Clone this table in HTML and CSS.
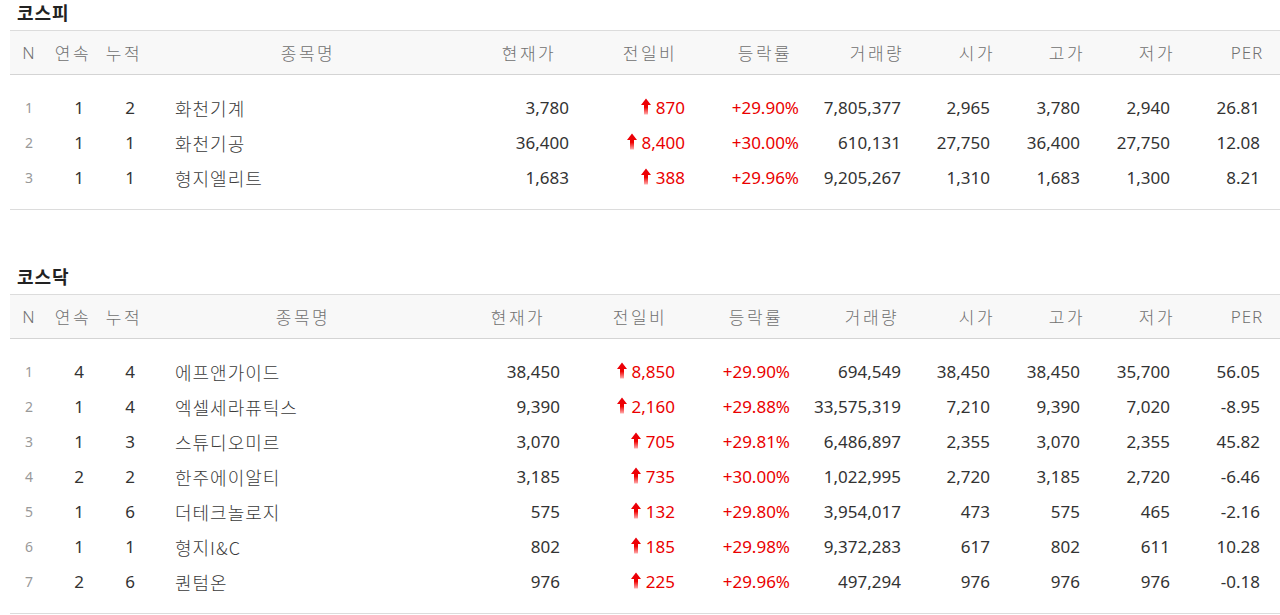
FILE: index.html
```html
<!DOCTYPE html>
<html lang="ko">
<head>
<meta charset="utf-8">
<title>상한가</title>
<link rel="stylesheet" href="styles.css">
</head>
<body>
<svg class="defs" width="0" height="0" aria-hidden="true">
  <defs>
    <linearGradient id="upg" x1="0" y1="0" x2="0" y2="1">
      <stop offset="0" stop-color="#e8000b"/>
      <stop offset="0.55" stop-color="#f00000"/>
      <stop offset="1" stop-color="#ffb0b0"/>
    </linearGradient>
    <symbol id="up" viewBox="0 0 10 16">
      <polygon points="5,0 10,6.5 7,6.5 7,16 3,16 3,6.5 0,6.5" fill="url(#upg)"/>
    </symbol>
  </defs>
</svg>

<section class="market">
  <h2 class="market-title">코스피</h2>
  <table class="stock t-kospi">
    <colgroup>
      <col class="c-n"><col class="c-run"><col class="c-acc"><col class="c-name"><col class="c-cur"><col class="c-diff"><col class="c-rate"><col class="c-vol"><col class="c-open"><col class="c-high"><col class="c-low"><col class="c-per">
    </colgroup>
    <thead>
      <tr><th>N</th><th>연속</th><th>누적</th><th>종목명</th><th>현재가</th><th>전일비</th><th>등락률</th><th>거래량</th><th>시가</th><th>고가</th><th>저가</th><th>PER</th></tr>
    </thead>
    <tbody>
      <tr class="gap-top"><td colspan="12"></td></tr>
      <tr><td class="n">1</td><td class="cnt">1</td><td class="cnt">2</td><td class="name">화천기계</td><td class="num cur">3,780</td><td class="num diff up"><svg class="arrow"><use href="#up"/></svg>870</td><td class="num rate up">+29.90%</td><td class="num vol">7,805,377</td><td class="num">2,965</td><td class="num">3,780</td><td class="num">2,940</td><td class="num">26.81</td></tr>
      <tr><td class="n">2</td><td class="cnt">1</td><td class="cnt">1</td><td class="name">화천기공</td><td class="num cur">36,400</td><td class="num diff up"><svg class="arrow"><use href="#up"/></svg>8,400</td><td class="num rate up">+30.00%</td><td class="num vol">610,131</td><td class="num">27,750</td><td class="num">36,400</td><td class="num">27,750</td><td class="num">12.08</td></tr>
      <tr><td class="n">3</td><td class="cnt">1</td><td class="cnt">1</td><td class="name">형지엘리트</td><td class="num cur">1,683</td><td class="num diff up"><svg class="arrow"><use href="#up"/></svg>388</td><td class="num rate up">+29.96%</td><td class="num vol">9,205,267</td><td class="num">1,310</td><td class="num">1,683</td><td class="num">1,300</td><td class="num">8.21</td></tr>
      <tr class="gap-bottom"><td colspan="12"></td></tr>
    </tbody>
  </table>
</section>

<section class="market market-next">
  <h2 class="market-title">코스닥</h2>
  <table class="stock t-kosdaq">
    <colgroup>
      <col class="c-n"><col class="c-run"><col class="c-acc"><col class="c-name"><col class="c-cur"><col class="c-diff"><col class="c-rate"><col class="c-vol"><col class="c-open"><col class="c-high"><col class="c-low"><col class="c-per">
    </colgroup>
    <thead>
      <tr><th>N</th><th>연속</th><th>누적</th><th>종목명</th><th>현재가</th><th>전일비</th><th>등락률</th><th>거래량</th><th>시가</th><th>고가</th><th>저가</th><th>PER</th></tr>
    </thead>
    <tbody>
      <tr class="gap-top"><td colspan="12"></td></tr>
      <tr><td class="n">1</td><td class="cnt">4</td><td class="cnt">4</td><td class="name">에프앤가이드</td><td class="num cur">38,450</td><td class="num diff up"><svg class="arrow"><use href="#up"/></svg>8,850</td><td class="num rate up">+29.90%</td><td class="num vol">694,549</td><td class="num">38,450</td><td class="num">38,450</td><td class="num">35,700</td><td class="num">56.05</td></tr>
      <tr><td class="n">2</td><td class="cnt">1</td><td class="cnt">4</td><td class="name">엑셀세라퓨틱스</td><td class="num cur">9,390</td><td class="num diff up"><svg class="arrow"><use href="#up"/></svg>2,160</td><td class="num rate up">+29.88%</td><td class="num vol">33,575,319</td><td class="num">7,210</td><td class="num">9,390</td><td class="num">7,020</td><td class="num">-8.95</td></tr>
      <tr><td class="n">3</td><td class="cnt">1</td><td class="cnt">3</td><td class="name">스튜디오미르</td><td class="num cur">3,070</td><td class="num diff up"><svg class="arrow"><use href="#up"/></svg>705</td><td class="num rate up">+29.81%</td><td class="num vol">6,486,897</td><td class="num">2,355</td><td class="num">3,070</td><td class="num">2,355</td><td class="num">45.82</td></tr>
      <tr><td class="n">4</td><td class="cnt">2</td><td class="cnt">2</td><td class="name">한주에이알티</td><td class="num cur">3,185</td><td class="num diff up"><svg class="arrow"><use href="#up"/></svg>735</td><td class="num rate up">+30.00%</td><td class="num vol">1,022,995</td><td class="num">2,720</td><td class="num">3,185</td><td class="num">2,720</td><td class="num">-6.46</td></tr>
      <tr><td class="n">5</td><td class="cnt">1</td><td class="cnt">6</td><td class="name">더테크놀로지</td><td class="num cur">575</td><td class="num diff up"><svg class="arrow"><use href="#up"/></svg>132</td><td class="num rate up">+29.80%</td><td class="num vol">3,954,017</td><td class="num">473</td><td class="num">575</td><td class="num">465</td><td class="num">-2.16</td></tr>
      <tr><td class="n">6</td><td class="cnt">1</td><td class="cnt">1</td><td class="name">형지I&amp;C</td><td class="num cur">802</td><td class="num diff up"><svg class="arrow"><use href="#up"/></svg>185</td><td class="num rate up">+29.98%</td><td class="num vol">9,372,283</td><td class="num">617</td><td class="num">802</td><td class="num">611</td><td class="num">10.28</td></tr>
      <tr><td class="n">7</td><td class="cnt">2</td><td class="cnt">6</td><td class="name">퀀텀온</td><td class="num cur">976</td><td class="num diff up"><svg class="arrow"><use href="#up"/></svg>225</td><td class="num rate up">+29.96%</td><td class="num vol">497,294</td><td class="num">976</td><td class="num">976</td><td class="num">976</td><td class="num">-0.18</td></tr>
      <tr class="gap-bottom"><td colspan="12"></td></tr>
    </tbody>
  </table>
</section>
</body>
</html>
```

FILE: styles.css
```css
html, body {
  margin: 0;
  padding: 0;
  background: #fff;
  overflow: hidden;
}

body {
  font-family: "Noto Sans", "Noto Sans CJK KR", sans-serif;
  color: #333;
  padding-left: 10px;
}

.defs {
  position: absolute;
  width: 0;
  height: 0;
}

.market-title {
  margin: 0;
  height: 30px;
  padding-left: 7px;
  font-family: "Noto Sans CJK KR", sans-serif;
  font-size: 18px;
  font-weight: 700;
  line-height: 24px;
  letter-spacing: 1px;
  color: #222;
}

.market-next {
  margin-top: 54px;
}

.stock {
  border-collapse: collapse;
  table-layout: fixed;
  width: 1282px;
}

.stock thead tr {
  background: #f8f8f8;
  border-top: 1px solid #dcdcdc;
  border-bottom: 1px solid #d4d4d4;
}

.stock th {
  height: 43px;
  padding: 0;
  font-family: "Noto Sans CJK KR", sans-serif;
  font-weight: 300;
  font-size: 17px;
  letter-spacing: 2.5px;
  color: #707070;
  text-align: center;
  white-space: nowrap;
}

.stock th:first-child,
.stock th:last-child {
  font-family: "Noto Sans", sans-serif;
  letter-spacing: 1px;
}

.stock td {
  height: 35px;
  padding: 0;
  font-size: 17px;
  line-height: 22px;
  white-space: nowrap;
  vertical-align: middle;
}

.stock .gap-top td {
  height: 15px;
}

.stock .gap-bottom td {
  height: 14px;
}

.stock tbody .gap-bottom {
  border-bottom: 1px solid #dcdcdc;
}

.stock td.n {
  text-align: center;
  font-size: 14px;
  color: #999;
}

.stock td.cnt {
  text-align: center;
  padding-left: 12px;
}

.stock td.name {
  padding-left: 25px;
  font-family: "Noto Sans CJK KR", sans-serif;
  font-weight: 300;
  font-size: 18px;
  line-height: 20px;
  letter-spacing: 1px;
  color: #3a3a3a;
}

.stock td.num {
  text-align: right;
  padding-right: 32px;
}

.stock td.cur,
.stock td.diff,
.stock td.rate {
  padding-right: 23px;
}

.stock td.vol {
  padding-right: 31px;
}

.stock td.up {
  color: #ea0000;
}

.arrow {
  width: 10px;
  height: 17px;
  margin-right: 5px;
  vertical-align: -1px;
}

/* column widths */
.c-n { width: 38px; }
.c-run { width: 50px; }
.c-acc { width: 52px; }
.c-open, .c-high, .c-low, .c-per { width: 90px; }

.t-kospi .c-name { width: 316px; }
.t-kospi .c-cur { width: 126px; }
.t-kospi .c-diff { width: 116px; }
.t-kospi .c-rate { width: 114px; }
.t-kospi .c-vol { width: 110px; }

.t-kosdaq .c-name { width: 306px; }
.t-kosdaq .c-cur { width: 124px; }
.t-kosdaq .c-diff { width: 120px; }
.t-kosdaq .c-rate { width: 112px; }
.t-kosdaq .c-vol { width: 120px; }

.t-kosdaq td.cur { padding-right: 20px; }
.t-kosdaq td.diff { padding-right: 25px; }
.t-kosdaq td.rate { padding-right: 22px; }
```
